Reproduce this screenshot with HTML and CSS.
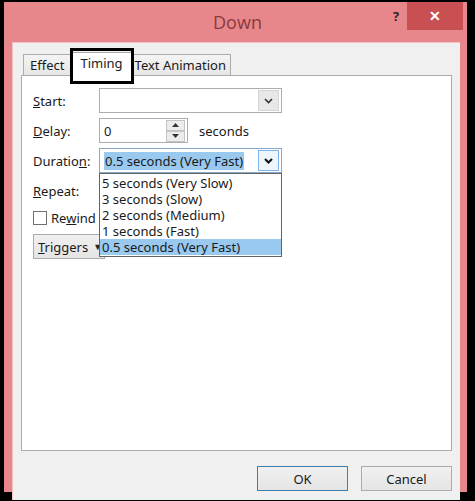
FILE: index.html
```html
<!DOCTYPE html>
<html lang="en">
<head>
    <meta charset="UTF-8">
    <title>Down</title>
    <link rel="stylesheet" href="styles.css">
</head>
<body>

<div class="window">
    <div class="titlebar">
        <div class="title">Down</div>
        <div class="help">?</div>
        <div class="close">&#x2715;</div>
    </div>

    <div class="client">
        <div class="tabs">
            <div class="tab effect">Effect</div>
            <div class="tab active">Timing</div>
            <div class="tab anim">Text Animation</div>
        </div>

        <div class="panel">
            <div class="row">
                <label class="label"><u>S</u>tart:</label>
                <div class="combo">
                    <span class="combo-text"></span>
                    <span class="drop">
                        <svg width="9" height="6" viewBox="0 0 9 6"><polyline points="1,1 4.5,4.5 8,1" fill="none" stroke="#333" stroke-width="1.6"/></svg>
                    </span>
                </div>
            </div>

            <div class="row">
                <label class="label"><u>D</u>elay:</label>
                <div class="spin">
                    <span class="spin-text">0</span>
                    <span class="spin-btns">
                        <span class="spin-btn"><svg width="7" height="4" viewBox="0 0 7 4"><polygon points="0,4 3.5,0 7,4" fill="#333"/></svg></span>
                        <span class="spin-btn"><svg width="7" height="4" viewBox="0 0 7 4"><polygon points="0,0 3.5,4 7,0" fill="#333"/></svg></span>
                    </span>
                </div>
                <span class="unit">seconds</span>
            </div>

            <div class="row">
                <label class="label">Duratio<u>n</u>:</label>
                <div class="combo focused">
                    <span class="combo-text"><span class="selected">0.5 seconds (Very Fast)</span></span>
                    <span class="drop">
                        <svg width="9" height="6" viewBox="0 0 9 6"><polyline points="1,1 4.5,4.5 8,1" fill="none" stroke="#111" stroke-width="2"/></svg>
                    </span>
                    <ul class="list">
                        <li>5 seconds (Very Slow)</li>
                        <li>3 seconds (Slow)</li>
                        <li>2 seconds (Medium)</li>
                        <li>1 seconds (Fast)</li>
                        <li class="current">0.5 seconds (Very Fast)</li>
                    </ul>
                </div>
            </div>

            <div class="row">
                <label class="label"><u>R</u>epeat:</label>
                <div class="combo"><span class="combo-text"></span></div>
            </div>

            <div class="row check-row">
                <span class="checkbox"></span>
                <span>Re<u>w</u>ind</span>
            </div>

            <div class="row">
                <div class="btn triggers"><span><u>T</u>riggers</span><span class="arrow">&#x25BC;</span></div>
            </div>
        </div>

        <div class="actions">
            <div class="btn ok">OK</div>
            <div class="btn">Cancel</div>
        </div>
    </div>
</div>

</body>
</html>
```

FILE: styles.css
```css
body {
    margin: 0;
    background: #000;
    width: 475px;
    height: 501px;
    overflow: hidden;
    font-family: "Noto Sans", sans-serif;
    font-size: 13px;
    color: #1a1a1a;
}
.window {
    margin: 2px 0 0 4px;
    width: 463px;
    height: 490px;
    background: #e8878b;
    display: flex;
    flex-direction: column;
}
.titlebar {
    height: 40px;
    display: flex;
    align-items: flex-start;
    padding-right: 4px;
}
.title {
    flex: 1;
    padding-left: 86px;
    text-align: center;
    font-family: "Open Sans", sans-serif;
    font-size: 18px;
    line-height: 40px;
    color: #8a3a40;
}
.help {
    width: 22px;
    text-align: center;
    font-family: "Open Sans", sans-serif;
    font-weight: bold;
    font-size: 13px;
    line-height: 28px;
    color: #3a2222;
}
.close {
    width: 56px;
    height: 28px;
    background: #c85052;
    color: #fff;
    text-align: center;
    font-size: 14px;
    font-weight: bold;
    line-height: 28px;
}
.client {
    flex: 1;
    margin: 0 7px 5px 8px;
    background: #f0f0f0;
    border-left: 1px solid #f3c4c6;
    border-top: 1px solid #f3c4c6;
    padding: 11px 8px 9px 8px;
    display: flex;
    flex-direction: column;
}
.tabs {
    display: flex;
    align-items: flex-end;
    height: 21px;
    padding-left: 2px;
}
.tab {
    height: 20px;
    padding: 0 5px;
    line-height: 20px;
    border: 1px solid #acacac;
    border-bottom: none;
    background: linear-gradient(#f4f4f4, #e6e6e6);
    margin-right: -1px;
}
.tab.effect {
    padding: 0 8px 0 6px;
}
.tab.anim {
    padding: 0 4px 0 3px;
}
.tab.active {
    position: relative;
    z-index: 2;
    height: 23px;
    margin: 0 -1px -1px 0;
    padding: 0 8px 0 7px;
    line-height: 20px;
    background: #fff;
}
/* thick outline drawn round the current tab */
.tab.active::after {
    content: "";
    position: absolute;
    left: -3px;
    right: -3px;
    top: -5px;
    bottom: -8px;
    border: 3px solid #000;
}
.panel {
    height: 362px;
    background: #fff;
    border: 1px solid #acacac;
    padding: 12px 0 0 11px;
    display: flex;
    flex-direction: column;
    gap: 5px;
}
.row {
    display: flex;
    align-items: center;
    height: 25px;
}
.label {
    width: 66px;
}
.combo {
    position: relative;
    width: 181px;
    height: 23px;
    border: 1px solid #abadb3;
    background: #fff;
    display: flex;
    align-items: center;
}
.combo-text {
    flex: 1;
    padding-left: 4px;
}
.drop {
    width: 19px;
    height: 19px;
    margin-right: 2px;
    background: #e8e8e8;
    border: 1px solid #d4d4d4;
    display: flex;
    align-items: center;
    justify-content: center;
}
.focused {
    border-color: #8aa8c8;
}
.focused .drop {
    background: #eef5fc;
    border-color: #7eb4ea;
}
.selected {
    background: #99c9ef;
    padding: 0 1px;
}
.list {
    position: absolute;
    z-index: 3;
    top: 24px;
    left: -1px;
    width: 181px;
    margin: 0;
    padding: 1px 0;
    list-style: none;
    background: #fff;
    border: 1px solid #646464;
}
.list li {
    height: 16px;
    line-height: 16px;
    padding-left: 2px;
}
.list li.current {
    background: #99c9ef;
}
.spin {
    width: 87px;
    height: 23px;
    border: 1px solid #abadb3;
    background: #fff;
    display: flex;
    align-items: center;
}
.spin-text {
    flex: 1;
    padding-left: 4px;
}
.spin-btns {
    display: flex;
    flex-direction: column;
    margin-right: 2px;
}
.spin-btn {
    width: 17px;
    height: 9px;
    background: #ececec;
    border: 1px solid #c4c4c4;
    display: flex;
    align-items: center;
    justify-content: center;
}
.unit {
    margin-left: 11px;
}
.check-row {
    height: 17px;
    margin-top: 1px;
    margin-bottom: 3px;
}
.checkbox {
    width: 12px;
    height: 12px;
    border: 1px solid #707070;
    background: #fff;
    margin-right: 4px;
}
.btn {
    height: 23px;
    border: 1px solid #acacac;
    background: linear-gradient(#f0f0f0, #e5e5e5);
    display: flex;
    align-items: center;
    justify-content: center;
}
.triggers {
    width: 66px;
    justify-content: flex-start;
    padding-left: 4px;
    gap: 5px;
}
.arrow {
    font-size: 9px;
    color: #222;
}
.actions {
    margin-top: 15px;
    display: flex;
    justify-content: flex-end;
    gap: 13px;
}
.actions .btn {
    width: 89px;
}
.actions .ok {
    border-color: #3c7fb1;
}
```
